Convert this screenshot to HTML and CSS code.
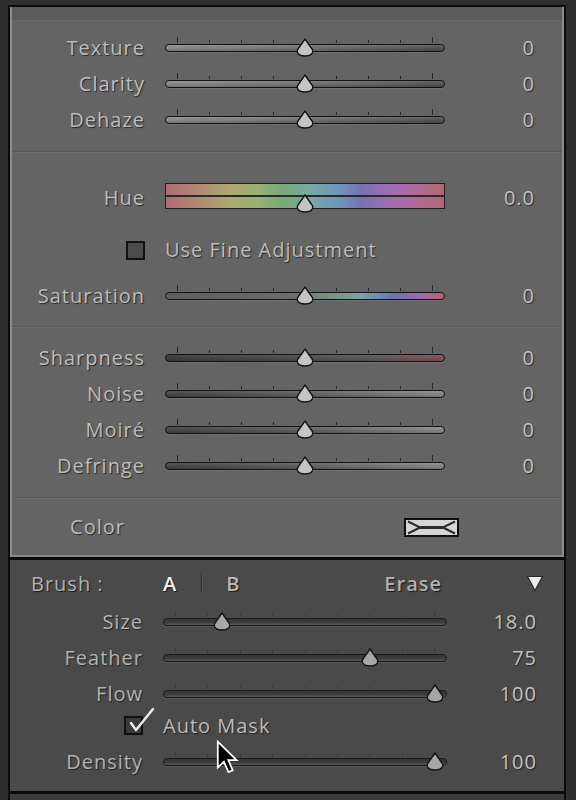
FILE: index.html
```html
<!DOCTYPE html>
<html>
<head>
<meta charset="utf-8">
<link rel="stylesheet" href="styles.css">
</head>
<body>
<div class="app">
  <div class="frame">
    <div class="upper">
      <div class="header"></div>
      <section class="sec sec1">
        <div class="row">
          <div class="label">Texture</div>
          <div class="slider">
            <div class="ticks"><i class="end"></i><i></i><i></i><i></i><i></i><i></i><i></i><i></i><i class="end"></i></div>
            <div class="track tone-ld"></div>
            <div class="thumb" style="--v:0.5"><svg viewBox="0 0 18 19" width="18" height="19"><path d="M9 1 L16 11 Q17.5 13 16 15.5 Q14 18 9 18 Q4 18 2 15.5 Q0.5 13 2 11 Z" class="thumb-shape"/></svg></div>
          </div>
          <div class="value">0</div>
        </div>
        <div class="row">
          <div class="label">Clarity</div>
          <div class="slider">
            <div class="ticks"><i class="end"></i><i></i><i></i><i></i><i></i><i></i><i></i><i></i><i class="end"></i></div>
            <div class="track tone-ld"></div>
            <div class="thumb" style="--v:0.5"><svg viewBox="0 0 18 19" width="18" height="19"><path d="M9 1 L16 11 Q17.5 13 16 15.5 Q14 18 9 18 Q4 18 2 15.5 Q0.5 13 2 11 Z" class="thumb-shape"/></svg></div>
          </div>
          <div class="value">0</div>
        </div>
        <div class="row">
          <div class="label">Dehaze</div>
          <div class="slider">
            <div class="ticks"><i class="end"></i><i></i><i></i><i></i><i></i><i></i><i></i><i></i><i class="end"></i></div>
            <div class="track tone-ld"></div>
            <div class="thumb" style="--v:0.5"><svg viewBox="0 0 18 19" width="18" height="19"><path d="M9 1 L16 11 Q17.5 13 16 15.5 Q14 18 9 18 Q4 18 2 15.5 Q0.5 13 2 11 Z" class="thumb-shape"/></svg></div>
          </div>
          <div class="value">0</div>
        </div>
      </section>
      <div class="sep"></div>
      <section class="sec sec2">
        <div class="row hue-row">
          <div class="label">Hue</div>
          <div class="slider hue-slider">
            <div class="hue-bar"><div class="hue-band"></div><div class="hue-band"></div></div>
            <div class="thumb hue-thumb" style="--v:0.5"><svg viewBox="0 0 18 19" width="18" height="19"><path d="M9 1 L16 11 Q17.5 13 16 15.5 Q14 18 9 18 Q4 18 2 15.5 Q0.5 13 2 11 Z" class="thumb-shape"/></svg></div>
          </div>
          <div class="value">0.0</div>
        </div>
        <div class="row fine-row">
          <div class="label check-cell"><span class="checkbox"></span></div>
          <div class="check-text">Use Fine Adjustment</div>
        </div>
        <div class="row">
          <div class="label">Saturation</div>
          <div class="slider">
            <div class="ticks"><i class="end"></i><i></i><i></i><i></i><i></i><i></i><i></i><i></i><i class="end"></i></div>
            <div class="track tone-sat"></div>
            <div class="thumb" style="--v:0.5"><svg viewBox="0 0 18 19" width="18" height="19"><path d="M9 1 L16 11 Q17.5 13 16 15.5 Q14 18 9 18 Q4 18 2 15.5 Q0.5 13 2 11 Z" class="thumb-shape"/></svg></div>
          </div>
          <div class="value">0</div>
        </div>
      </section>
      <div class="sep"></div>
      <section class="sec sec3">
        <div class="row">
          <div class="label">Sharpness</div>
          <div class="slider">
            <div class="ticks"><i class="end"></i><i></i><i></i><i></i><i></i><i></i><i></i><i></i><i class="end"></i></div>
            <div class="track tone-sharp"></div>
            <div class="thumb" style="--v:0.5"><svg viewBox="0 0 18 19" width="18" height="19"><path d="M9 1 L16 11 Q17.5 13 16 15.5 Q14 18 9 18 Q4 18 2 15.5 Q0.5 13 2 11 Z" class="thumb-shape"/></svg></div>
          </div>
          <div class="value">0</div>
        </div>
        <div class="row">
          <div class="label">Noise</div>
          <div class="slider">
            <div class="ticks"><i class="end"></i><i></i><i></i><i></i><i></i><i></i><i></i><i></i><i class="end"></i></div>
            <div class="track tone-dl"></div>
            <div class="thumb" style="--v:0.5"><svg viewBox="0 0 18 19" width="18" height="19"><path d="M9 1 L16 11 Q17.5 13 16 15.5 Q14 18 9 18 Q4 18 2 15.5 Q0.5 13 2 11 Z" class="thumb-shape"/></svg></div>
          </div>
          <div class="value">0</div>
        </div>
        <div class="row">
          <div class="label">Moiré</div>
          <div class="slider">
            <div class="ticks"><i class="end"></i><i></i><i></i><i></i><i></i><i></i><i></i><i></i><i class="end"></i></div>
            <div class="track tone-dl"></div>
            <div class="thumb" style="--v:0.5"><svg viewBox="0 0 18 19" width="18" height="19"><path d="M9 1 L16 11 Q17.5 13 16 15.5 Q14 18 9 18 Q4 18 2 15.5 Q0.5 13 2 11 Z" class="thumb-shape"/></svg></div>
          </div>
          <div class="value">0</div>
        </div>
        <div class="row">
          <div class="label">Defringe</div>
          <div class="slider">
            <div class="ticks"><i class="end"></i><i></i><i></i><i></i><i></i><i></i><i></i><i></i><i class="end"></i></div>
            <div class="track tone-dl"></div>
            <div class="thumb" style="--v:0.5"><svg viewBox="0 0 18 19" width="18" height="19"><path d="M9 1 L16 11 Q17.5 13 16 15.5 Q14 18 9 18 Q4 18 2 15.5 Q0.5 13 2 11 Z" class="thumb-shape"/></svg></div>
          </div>
          <div class="value">0</div>
        </div>
      </section>
      <div class="sep"></div>
      <section class="sec sec4">
        <div class="row color-row">
          <div class="label color-label">Color</div>
          <div class="swatch">
            <svg viewBox="0 0 51 15" width="51" height="15">
              <path d="M2 1.5 L14 7.5 L37 7.5 L49 1.5 M2 13.5 L14 7.5 M37 7.5 L49 13.5" class="swatch-x"/>
              <rect x="13" y="6" width="25" height="3" class="swatch-bar"/>
            </svg>
          </div>
        </div>
      </section>
    </div>
    <div class="lower">
      <div class="brush-row">
        <div class="brush-label">Brush :</div>
        <div class="brush-a">A</div>
        <div class="brush-div"></div>
        <div class="brush-b">B</div>
        <div class="brush-erase">Erase</div>
        <svg class="brush-tri" viewBox="0 0 18 17" width="18" height="17"><path d="M1.5 1.5 L16.5 1.5 L9 15.5 Z" class="tri-shape"/></svg>
      </div>
      <div class="row lrow">
        <div class="label">Size</div>
        <div class="slider lslider">
          <div class="ticks"><i class="end"></i><i></i><i></i><i></i><i></i><i></i><i></i><i></i><i class="end"></i></div>
          <div class="track tone-low"></div>
          <div class="thumb" style="--v:0.18"><svg viewBox="0 0 18 19" width="18" height="19"><path d="M9 1 L16 11 Q17.5 13 16 15.5 Q14 18 9 18 Q4 18 2 15.5 Q0.5 13 2 11 Z" class="thumb-shape low"/></svg></div>
        </div>
        <div class="value">18.0</div>
      </div>
      <div class="row lrow">
        <div class="label">Feather</div>
        <div class="slider lslider">
          <div class="ticks"><i class="end"></i><i></i><i></i><i></i><i></i><i></i><i></i><i></i><i class="end"></i></div>
          <div class="track tone-low"></div>
          <div class="thumb" style="--v:0.75"><svg viewBox="0 0 18 19" width="18" height="19"><path d="M9 1 L16 11 Q17.5 13 16 15.5 Q14 18 9 18 Q4 18 2 15.5 Q0.5 13 2 11 Z" class="thumb-shape low"/></svg></div>
        </div>
        <div class="value">75</div>
      </div>
      <div class="row lrow">
        <div class="label">Flow</div>
        <div class="slider lslider">
          <div class="ticks"><i class="end"></i><i></i><i></i><i></i><i></i><i></i><i></i><i></i><i class="end"></i></div>
          <div class="track tone-low"></div>
          <div class="thumb" style="--v:1"><svg viewBox="0 0 18 19" width="18" height="19"><path d="M9 1 L16 11 Q17.5 13 16 15.5 Q14 18 9 18 Q4 18 2 15.5 Q0.5 13 2 11 Z" class="thumb-shape low"/></svg></div>
        </div>
        <div class="value">100</div>
      </div>
      <div class="row auto-row">
        <div class="label check-cell">
          <span class="checkbox dark">
            <svg class="checkmark" viewBox="0 0 30 28" width="30" height="28"><path d="M5 15 L10 22 L27 1" class="check-path"/></svg>
          </span>
        </div>
        <div class="check-text auto-text">Auto Mask</div>
      </div>
      <div class="row lrow">
        <div class="label">Density</div>
        <div class="slider lslider">
          <div class="ticks"><i class="end"></i><i></i><i></i><i></i><i></i><i></i><i></i><i></i><i class="end"></i></div>
          <div class="track tone-low"></div>
          <div class="thumb" style="--v:1"><svg viewBox="0 0 18 19" width="18" height="19"><path d="M9 1 L16 11 Q17.5 13 16 15.5 Q14 18 9 18 Q4 18 2 15.5 Q0.5 13 2 11 Z" class="thumb-shape low"/></svg></div>
        </div>
        <div class="value">100</div>
      </div>
    </div>
    <div class="next"></div>
  </div>
</div>
<svg class="cursor" viewBox="0 0 14 21" width="23" height="34"><path d="M1 1 L1 17 L4.8 13.4 L7.6 19.8 L10.2 18.7 L7.5 12.4 L12.6 12.4 Z" class="cursor-shape"/></svg>
</body>
</html>
```

FILE: styles.css
```css
* { box-sizing: border-box; }
html, body { margin: 0; padding: 0; }
body {
  background: #2e2e2e;
  width: 576px;
  height: 800px;
  overflow: hidden;
  position: relative;
  font-family: "Open Sans", "DejaVu Sans", sans-serif;
  font-size: 20px;
  letter-spacing: 1px;
  color: #bdbdbd;
}
.app { padding: 5px 10px 0 8px; }
.frame {
  width: 558px;
  border-top: 2px solid #0b0b0b;
  border-left: 2px solid #0b0b0b;
  border-right: 2px solid #0b0b0b;
}
.upper {
  background: #646464;
  border-left: 2px solid #8d8d8d;
  border-right: 2px solid #8d8d8d;
  border-bottom: 2px solid #8a8a8a;
}
.header {
  height: 14px;
  background: #5b5b5b;
  border-bottom: 1px solid #6a6a6a;
}
.sep {
  height: 2px;
  border-top: 1px solid #575757;
  border-bottom: 1px solid #6c6c6c;
}
.sec1 { padding: 8px 0 14px; }
.sec2 { padding: 18px 0 13px; }
.sec3 { padding: 11px 0 14px; }
.sec4 { height: 56px; display: flex; align-items: center; }

.row {
  display: flex;
  align-items: flex-start;
  height: 36px;
  line-height: 38px;
}
.label {
  width: 133px;
  flex: none;
  text-align: right;
  text-shadow: 1px 1px 1px rgba(20,20,20,0.75);
}
.value {
  width: 90px;
  flex: none;
  text-align: right;
  color: #c2c2c2;
  text-shadow: 1px 1px 1px rgba(20,20,20,0.75);
}
.slider {
  position: relative;
  width: 280px;
  height: 20px;
  margin: 8px 0 0 20px;
  flex: none;
}
.ticks {
  height: 6px;
  padding: 0 12px;
  display: flex;
  justify-content: space-between;
  align-items: flex-end;
}
.ticks i {
  display: block;
  width: 1px;
  height: 3px;
  background: #262626;
}
.ticks i.end { height: 6px; }
.track {
  margin-top: 1px;
  height: 8px;
  border: 1px solid #121212;
  border-radius: 4px;
  box-shadow: 0 1px 0 rgba(255,255,255,0.08);
}
.tone-ld {
  background: linear-gradient(to bottom, rgba(255,255,255,0.14), rgba(0,0,0,0.14)),
              linear-gradient(to right, #8a8a8a, #6e6e6e 50%, #4c4c4c);
}
.tone-dl {
  background: linear-gradient(to bottom, rgba(255,255,255,0.1), rgba(0,0,0,0.14)),
              linear-gradient(to right, #404040, #5e5e5e 50%, #8a8a8a);
}
.tone-sharp {
  background: linear-gradient(to bottom, rgba(255,255,255,0.06), rgba(0,0,0,0.14)),
              linear-gradient(to right, #3c3c3c, #505050 50%, #5c5a5a 75%, #8a4f57);
}
.tone-sat {
  background: linear-gradient(to right, #5e5e5e, #6c6c6c 45%, #78907a 58%, #78a6a6 70%, #6a72b6 82%, #a06aa8 92%, #b86272);
}
.thumb {
  position: absolute;
  top: 1px;
  left: calc(12px + var(--v) * (100% - 24px) - 9px);
  width: 18px;
  height: 19px;
}
.thumb svg { display: block; }
.thumb-shape {
  fill: #c4c4c4;
  stroke: #161616;
  stroke-width: 1.4;
}
.thumb-shape.low { fill: #a6a6a6; }

.hue-row { height: 52px; line-height: 54px; }
.hue-slider { height: 30px; margin-top: 12px; }
.hue-bar {
  height: 26px;
  border: 1px solid #1e1e1e;
  display: flex;
  flex-direction: column;
  background: linear-gradient(to right, #b06a78, #b08a72 12%, #aeaa74 24%, #98b072 33%, #78a87a 42%, #78a8a2 52%, #7096b8 62%, #7872b4 70%, #9a6eb2 79%, #ae6ca6 87%, #b06a84 95%, #b06a74);
}
.hue-band { flex: 1; }
.hue-band + .hue-band { border-top: 2px solid #2a2a2a; }
.hue-thumb { top: 11px; }

.fine-row { height: 54px; line-height: 54px; }
.check-cell {
  display: flex;
  justify-content: flex-end;
  align-items: center;
  height: 100%;
}
.checkbox {
  position: relative;
  display: block;
  width: 19px;
  height: 19px;
  border: 2px solid #111;
  background: #4b4b4b;
}
.check-text {
  margin-left: 20px;
  text-shadow: 1px 1px 1px rgba(20,20,20,0.75);
}

.color-row { width: 100%; height: 36px; align-items: center; }
.color-label { width: 113px; }
.swatch {
  margin-left: 279px;
  width: 55px;
  height: 19px;
  border: 2px solid #0e0e0e;
  background: #d6d6d6;
}
.swatch svg { display: block; }
.swatch-x { fill: none; stroke: #2c2c2c; stroke-width: 2; }
.swatch-bar { fill: #2c2c2c; }

.lower {
  background: #4a4a4a;
  border-top: 3px solid #0b0b0b;
  border-bottom: 3px solid #0b0b0b;
  padding: 3px 0 12px;
  color: #b3b3b3;
}
.brush-row {
  display: flex;
  align-items: center;
  height: 40px;
  padding-right: 20px;
  font-weight: 600;
}
.brush-label {
  width: 133px;
  padding-left: 21px;
  font-weight: 400;
  text-shadow: 1px 1px 1px rgba(10,10,10,0.75);
}
.brush-a {
  margin-left: 20px;
  color: #f0f0f0;
  text-shadow: 1px 1px 1px rgba(10,10,10,0.8);
}
.brush-div {
  margin-left: 24px;
  width: 1px;
  height: 20px;
  background: #353535;
  box-shadow: 1px 0 0 #555;
}
.brush-b {
  margin-left: 24px;
  color: #b8b8b8;
  text-shadow: 1px 1px 1px rgba(10,10,10,0.8);
}
.brush-erase {
  margin-left: auto;
  margin-right: 84px;
  color: #b0b0b0;
  text-shadow: 1px 1px 1px rgba(10,10,10,0.8);
}
.brush-tri { display: block; }
.tri-shape { fill: #ececec; stroke: #2a2a2a; stroke-width: 1.2; }

.lslider { width: 284px; }
.lrow .ticks i { background: #3a3a3a; }
.tone-low {
  border-color: #1a1a1a;
  background: linear-gradient(to bottom, #363636, #3c3c3c 55%, #5a5a5a);
}
.auto-row { height: 28px; line-height: 30px; margin-bottom: 4px; }
.checkbox.dark { background: #3a3a3a; width: 19px; height: 19px; }
.checkmark {
  position: absolute;
  left: 0px;
  top: -10px;
}
.check-path { fill: none; stroke: #eeeeee; stroke-width: 2.4; stroke-linecap: round; stroke-linejoin: round; }
.auto-text { color: #bcbcbc; }
.next { height: 10px; background: #3c3c3c; }

.cursor {
  position: absolute;
  left: 216px;
  top: 740px;
}
.cursor-shape { fill: #000; stroke: #fff; stroke-width: 1.1; stroke-linejoin: miter; }
```
